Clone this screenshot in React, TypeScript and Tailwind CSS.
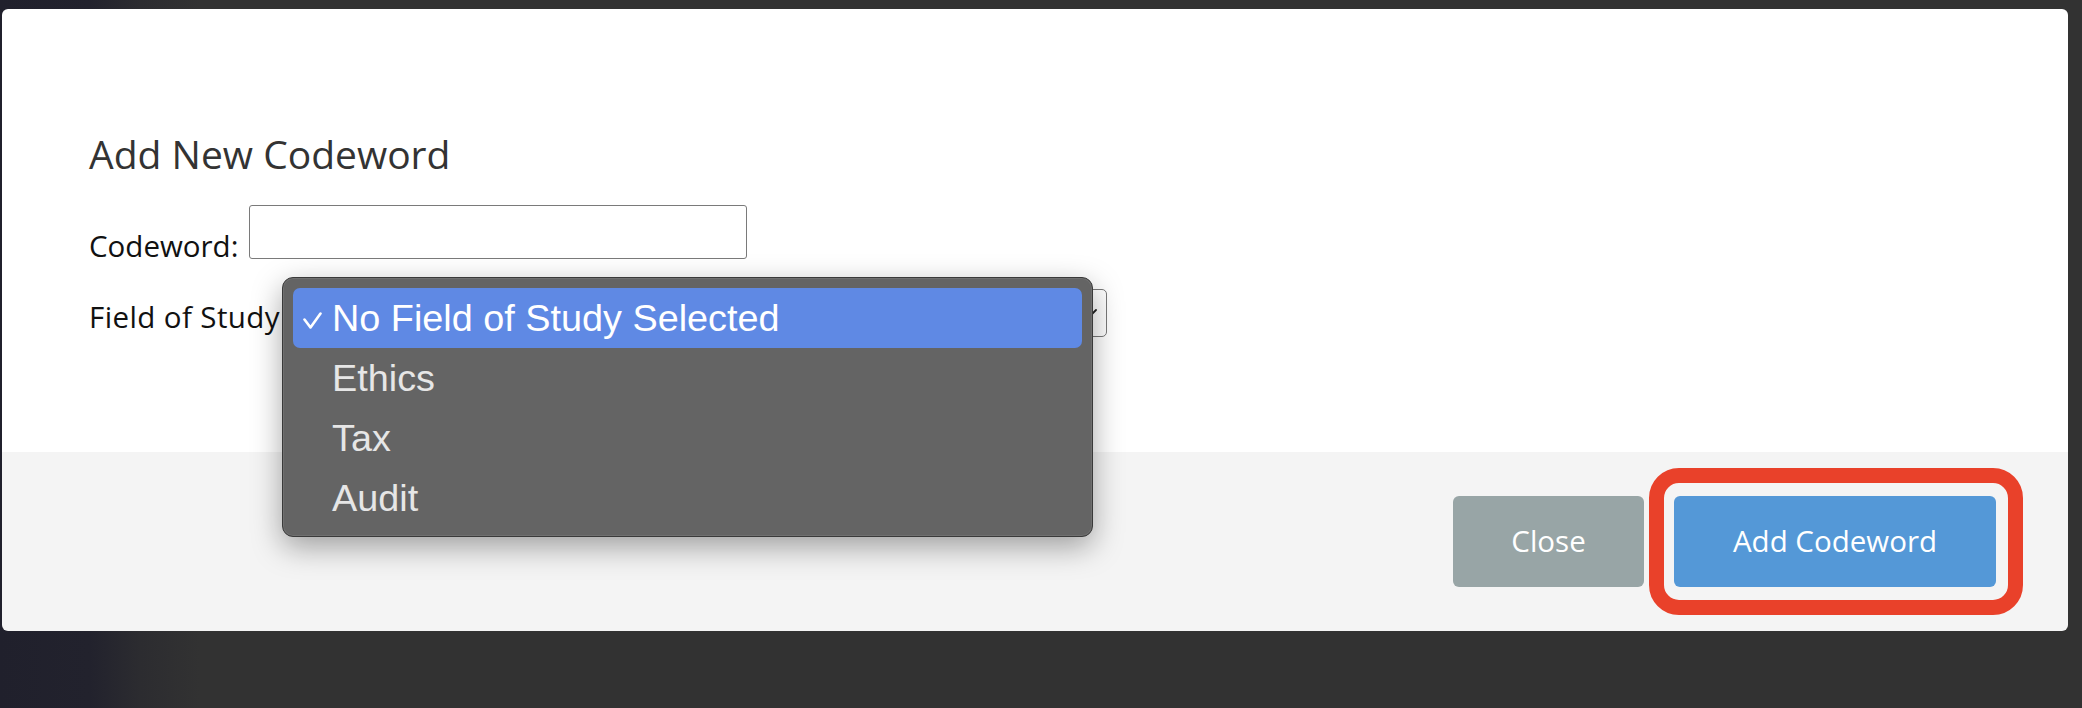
import React from "react";

const uiFont = { fontFamily: '"Open Sans", "DejaVu Sans", sans-serif' };
const menuFont = { fontFamily: '"Liberation Sans", Arial, sans-serif' };

function Check() {
  return (
    <svg width="19" height="17" viewBox="0 0 19 17" className="block">
      <path d="M1.5 7.5 L7.5 15.5 L17.5 1.5" fill="none" stroke="#ffffff" strokeWidth="2.6" strokeLinecap="round" strokeLinejoin="round" />
    </svg>
  );
}

export default function App() {
  const options = ["Ethics", "Tax", "Audit"];
  return (
    <div className="relative w-[2082px] h-[708px] overflow-hidden pt-[9px] pl-[2px] bg-[linear-gradient(to_right,#20202c_0px,#22222d_90px,#2c2c30_140px,#323232_200px)]">
      <div className="w-[2066px] h-[622px] rounded-[6px] overflow-hidden flex flex-col" style={uiFont}>
        <div className="h-[443px] bg-white pl-[87px] pt-[126px]">
          <h2 className="text-[39px] leading-[38px] text-[#333333] font-normal">Add New Codeword</h2>
          <div className="mt-[32px] flex items-end">
            <label className="text-[29.5px] leading-[27px] text-[#111111] mr-[11px]">Codeword:</label>
            <input className="w-[498px] h-[54px] border border-[#7a7a7a] rounded-[3px] bg-white outline-none" />
          </div>
          <div className="mt-[30px] flex items-end">
            <label className="text-[29.5px] leading-[27px] tracking-[0.4px] text-[#111111] mr-[3px] mb-[7px]">Field of Study</label>
            <div className="relative w-[824px] h-[48px] border border-[#7a7a7a] rounded-[5px] bg-white">
              <svg width="10" height="10" viewBox="0 0 10 10" className="absolute right-[6px] top-[18px]">
                <path d="M1 7 L6 2" fill="none" stroke="#222" strokeWidth="1.8" strokeLinecap="round" />
              </svg>
            </div>
          </div>
        </div>
        <div className="flex-1 bg-[#f4f4f4] flex items-center justify-end pr-[72px] gap-[30px]">
          <button className="w-[191px] h-[91px] rounded-[6px] bg-[#98a5a6] text-white text-[29.5px]">Close</button>
          <button className="w-[322px] h-[91px] rounded-[6px] bg-[#5498d7] text-white text-[29.5px]">Add Codeword</button>
        </div>
      </div>

      <div className="absolute left-[1649px] top-[468px] w-[374px] h-[147px] border-[15px] border-[#e9412a] rounded-[30px]" />

      <div
        className="absolute left-[282px] top-[277px] w-[811px] h-[260px] rounded-[11px] border border-[#3a3a3a] bg-[#646464] pt-[10px] px-[10px] shadow-[0_10px_30px_rgba(0,0,0,0.35),inset_0_0_0_1px_rgba(255,255,255,0.08)]"
        style={menuFont}
      >
        <div className="h-[60px] rounded-[7px] bg-[#5f89e4] flex items-center pl-[10px]">
          <span className="w-[29px] flex items-center pt-[5px]">
            <Check />
          </span>
          <span className="text-[37.8px] leading-[38px] text-white">No Field of Study Selected</span>
        </div>
        {options.map((o) => (
          <div key={o} className="h-[60px] flex items-center pl-[39px]">
            <span className="text-[37.8px] leading-[38px] text-[#e6e6e6]">{o}</span>
          </div>
        ))}
      </div>
    </div>
  );
}
